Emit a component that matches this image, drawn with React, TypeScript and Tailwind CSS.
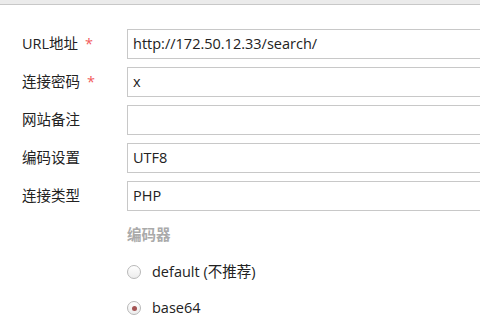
import React from 'react';

const fields = [
  { label: 'URL地址', value: 'http://172.50.12.33/search/', required: true },
  { label: '连接密码', value: 'x', required: true },
  { label: '网站备注', value: '', required: false },
  { label: '编码设置', value: 'UTF8', required: false },
  { label: '连接类型', value: 'PHP', required: false },
];

const encoders = [
  { label: 'default (不推荐)', checked: false },
  { label: 'base64', checked: true },
];

function Radio({ checked }: { checked: boolean }) {
  return (
    <span className="w-[14px] h-[14px] rounded-full border border-[#b8b8b8] bg-gradient-to-b from-white to-[#ececec] flex items-center justify-center shrink-0">
      {checked && <span className="w-[5px] h-[5px] rounded-full bg-[#a45454]" />}
    </span>
  );
}

export default function App() {
  return (
    <div
      className="w-[480px] h-[333px] bg-white overflow-hidden text-[14.5px] text-[#222]"
      style={{ fontFamily: '"Open Sans", "Noto Sans CJK SC", sans-serif' }}
    >
      <div className="h-[5px] bg-[#ebebeb] border-b border-[#c8c8c8]" />

      {/* connection fields */}
      <div className="flex flex-col gap-[8px] pt-[24px] pl-[22px]">
        {fields.map((f) => (
          <div key={f.label} className="flex items-center h-[30px]">
            <div className="w-[105px] shrink-0 flex items-center leading-[20px]">
              <span>{f.label}</span>
              {f.required && <span className="ml-[7px] text-[#f25c5c]">*</span>}
            </div>
            <div className="w-[380px] h-[30px] shrink-0 border border-[#c8c8c8] pl-[5px] flex items-center text-[#222] leading-[20px]">
              {f.value}
            </div>
          </div>
        ))}
      </div>

      {/* encoder choice */}
      <div className="pl-[127px] pt-[14px]">
        <div className="font-bold text-[#aaaaaa] leading-[20px]">编码器</div>
        <div className="flex flex-col gap-[16px] mt-[17px]">
          {encoders.map((e) => (
            <div key={e.label} className="flex items-center gap-[11px] h-[20px] leading-[20px] text-[#222]">
              <Radio checked={e.checked} />
              <span>{e.label}</span>
            </div>
          ))}
        </div>
      </div>
    </div>
  );
}
